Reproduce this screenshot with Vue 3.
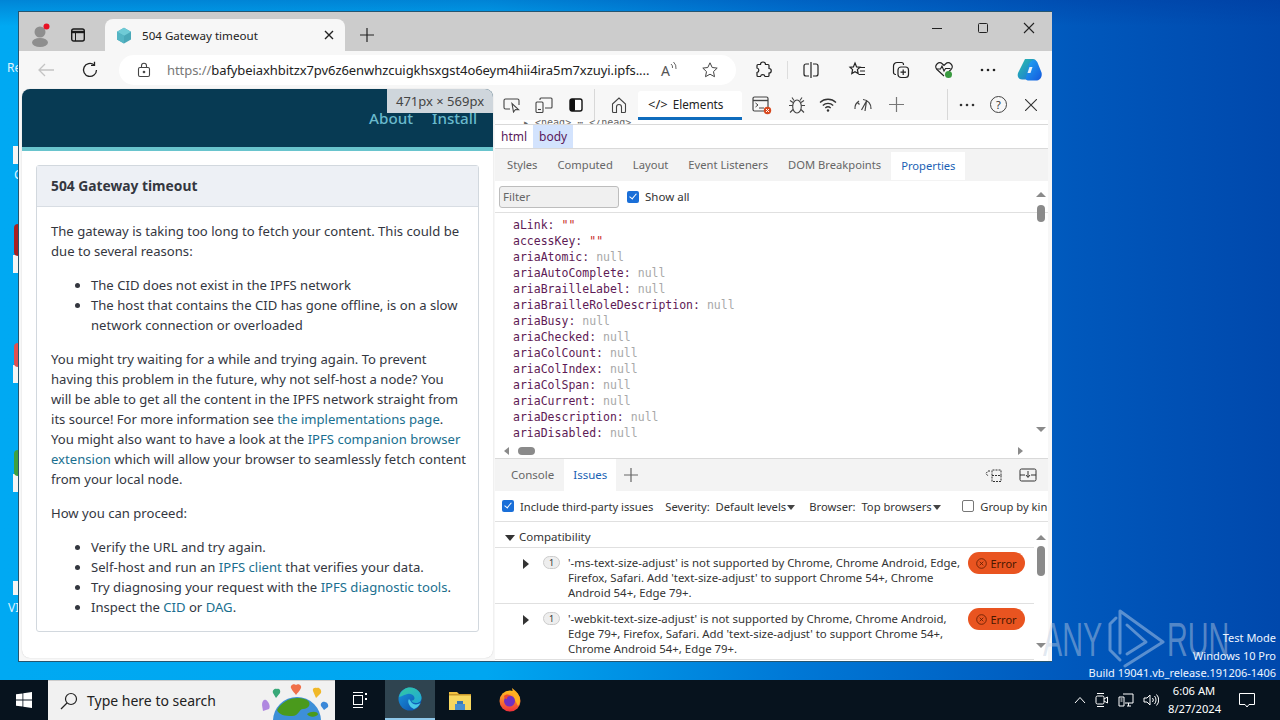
<script setup>
const props = [
  { key: 'aLink', value: '""', str: true },
  { key: 'accessKey', value: '""', str: true },
  { key: 'ariaAtomic', value: 'null' },
  { key: 'ariaAutoComplete', value: 'null' },
  { key: 'ariaBrailleLabel', value: 'null' },
  { key: 'ariaBrailleRoleDescription', value: 'null' },
  { key: 'ariaBusy', value: 'null' },
  { key: 'ariaChecked', value: 'null' },
  { key: 'ariaColCount', value: 'null' },
  { key: 'ariaColIndex', value: 'null' },
  { key: 'ariaColSpan', value: 'null' },
  { key: 'ariaCurrent', value: 'null' },
  { key: 'ariaDescription', value: 'null' },
  { key: 'ariaDisabled', value: 'null' }
]

const subTabs = ['Styles', 'Computed', 'Layout', 'Event Listeners', 'DOM Breakpoints']

const issues = [
  {
    lines: [
      "'-ms-text-size-adjust' is not supported by Chrome, Chrome Android, Edge,",
      "Firefox, Safari. Add 'text-size-adjust' to support Chrome 54+, Chrome",
      'Android 54+, Edge 79+.'
    ]
  },
  {
    lines: [
      "'-webkit-text-size-adjust' is not supported by Chrome, Chrome Android,",
      "Edge 79+, Firefox, Safari. Add 'text-size-adjust' to support Chrome 54+,",
      'Chrome Android 54+, Edge 79+.'
    ]
  }
]

// scraps of desktop icons showing left of the browser window
const scraps = [
  { top: 146, height: 18, color: '#f4f4f4' },
  { top: 255, height: 18, color: '#f4f4f4' },
  { top: 365, height: 18, color: '#f4f4f4' },
  { top: 474, height: 18, color: '#f4f4f4' },
  { top: 581, height: 14, color: '#f4f4f4' }
]
</script>

<template>
  <div class="desktop">
    <div class="desk-label" style="top: 59px">Re</div>
    <div class="desk-label" style="top: 166px; left: 14px">C</div>
    <div class="desk-label" style="top: 599px; left: 8px">VI</div>
    <div v-for="s in scraps" :key="s.top" class="scrap" :style="{ top: s.top + 'px', height: s.height + 'px', background: s.color }"></div>
    <div class="blob" style="top: 224px; height: 32px; background: #a82020"></div>
    <div class="blob" style="top: 343px; height: 24px; background: #e05050"></div>
    <div class="blob" style="top: 450px; height: 26px; background: #3fa03f"></div>

    <div class="window">
      <!-- tab strip -->
      <div class="tabstrip">
        <div class="profile">
          <svg width="24" height="28" viewBox="0 0 24 28">
            <circle cx="11" cy="11" r="5.500" fill="#8e8e8e" />
            <ellipse cx="11" cy="21.500" rx="8" ry="4.500" fill="#8e8e8e" />
            <circle cx="17.500" cy="5.500" r="3" fill="#e81123" />
          </svg>
        </div>
        <div class="strip-btn">
          <svg width="16" height="16" viewBox="0 0 16 16" fill="none" stroke="#1a1a1a" stroke-width="1.400">
            <rect x="1.700" y="2" width="12.600" height="12" rx="2" />
            <path d="M1.700 5h12.600" stroke-width="2.400" />
            <path d="M5.500 5v9" stroke-width="1" />
          </svg>
        </div>
        <div class="tab">
          <svg width="16" height="17" viewBox="0 0 16 17">
            <path d="M8 .8l7 4v7.600l-7 4-7-4V4.800z" fill="#4aa8b8" />
            <path d="M8 .8l7 4-7 4-7-4z" fill="#6fcbd6" />
            <path d="M8 8.800v7.600l-7-4V4.800z" fill="#55b5c4" />
          </svg>
          <span class="tab-title">504 Gateway timeout</span>
          <svg class="tab-close" width="10" height="10" viewBox="0 0 10 10" stroke="#222" stroke-width="1.400"><path d="M1 1l8 8M9 1l-8 8" /></svg>
        </div>
        <svg class="new-tab" width="16" height="16" viewBox="0 0 16 16" stroke="#222" stroke-width="1.200"><path d="M8 1v14M1 8h14" /></svg>
        <div class="win-controls">
          <svg width="12" height="12" viewBox="0 0 12 12" stroke="#222"><path d="M1 6.500h10" /></svg>
          <svg width="12" height="12" viewBox="0 0 12 12" stroke="#222" fill="none"><rect x="1.500" y="1.500" width="9" height="9" rx="1" /></svg>
          <svg width="12" height="12" viewBox="0 0 12 12" stroke="#222" stroke-width="1.100"><path d="M1 1l10 10M11 1L1 11" /></svg>
        </div>
      </div>

      <!-- address bar row -->
      <div class="toolbar">
        <svg class="back" width="18" height="16" viewBox="0 0 18 16" fill="none" stroke="#c4c4c4" stroke-width="1.300"><path d="M17 8H2M8 2L2 8l6 6" /></svg>
        <svg class="reload" width="18" height="18" viewBox="0 0 18 18" fill="none" stroke="#222" stroke-width="1.300"><path d="M15.500 9A6.500 6.500 0 1 1 13 3.800" /><path d="M13.500 .8v3.600H10" /></svg>
        <div class="address">
          <svg class="lock" width="14" height="16" viewBox="0 0 14 16" fill="none" stroke="#444" stroke-width="1.100"><rect x="1.500" y="5.500" width="11" height="9" rx="1.500" /><path d="M4.500 5.500V3.800a2.500 2.500 0 0 1 5 0v1.700" /><circle cx="7" cy="10" r=".8" fill="#444" /></svg>
          <span class="url"><span class="scheme">https://</span>bafybeiaxhbitzx7pv6z6enwhzcuigkhsxgst4o6eym4hii4ira5m7xzuyi.ipfs....</span>
          <span class="read-aloud">A<svg width="8" height="12" viewBox="0 0 8 12" fill="none" stroke="#555" stroke-width=".9"><path d="M1 3a4 4 0 0 1 1.500 4M3.500 1a8 8 0 0 1 2.500 7" /></svg></span>
          <svg class="star" width="18" height="18" viewBox="0 0 18 18" fill="none" stroke="#444"><path d="M9 1.800l2.200 4.700 5 .6-3.700 3.500 1 5.100L9 13.200l-4.500 2.500 1-5.100L1.800 7.100l5-.6z" /></svg>
        </div>
        <div class="tool-icons">
          <svg width="18" height="18" viewBox="0 0 18 18" fill="none" stroke="#222" stroke-width="1.200"><path d="M6.500 3.500a2.500 2.500 0 0 1 5 0h2.500a1 1 0 0 1 1 1v3a2.200 2.200 0 0 1 0 4.500v2.500a1 1 0 0 1-1 1h-3a2.300 2.300 0 0 0-4.500 0H4a1 1 0 0 1-1-1v-3a2.300 2.300 0 0 0 0-4.500V4.500a1 1 0 0 1 1-1z" /></svg>
          <span class="tool-sep"></span>
          <svg width="18" height="18" viewBox="0 0 18 18" fill="none" stroke="#222" stroke-width="1.200"><path d="M9 1v16M7 3H4a2 2 0 0 0-2 2v8a2 2 0 0 0 2 2h3M11 3h3a2 2 0 0 1 2 2v8a2 2 0 0 1-2 2h-3" /></svg>
          <svg class="fav" width="18" height="18" viewBox="0 0 18 18" fill="none" stroke="#222" stroke-width="1.200"><path d="M7 2l1.600 3.900 3.400.3-2.600 2.400.8 4L7 10.800l-3.200 1.800.8-4L2 6.200l3.400-.3zM12 6.500h5M12 10h5M10.500 13.500H17" /></svg>
          <svg width="18" height="18" viewBox="0 0 18 18" fill="none" stroke="#222" stroke-width="1.200"><rect x="6" y="6" width="10.500" height="10.500" rx="3" /><path d="M11.200 8.500v5.500M8.500 11.200H14M4 13.500H3.500A2 2 0 0 1 1.500 11.500V5a3.500 3.500 0 0 1 3.500-3.500h4.500a2 2 0 0 1 2 2V4" /></svg>
          <svg class="health" width="20" height="18" viewBox="0 0 20 18" fill="none" stroke="#222" stroke-width="1.100"><path d="M10 15L3 8.500a4 4 0 0 1 0-5.500 4 4 0 0 1 5.500 0L10 4.500 11.500 3a4 4 0 0 1 5.500 0 4 4 0 0 1 0 5.500L15 10.500" /><path d="M2.500 8h4l1.500-3 2 5 1.500-2.500h5" /><circle cx="14.500" cy="13.500" r="3.500" fill="#3a9a40" stroke="none" /></svg>
          <svg width="16" height="4" viewBox="0 0 16 4" fill="#222"><circle cx="2" cy="2" r="1.300" /><circle cx="8" cy="2" r="1.300" /><circle cx="14" cy="2" r="1.300" /></svg>
          <svg class="copilot" width="26" height="24" viewBox="0 0 26 24">
            <defs>
              <linearGradient id="cpA" x1="0" y1="0" x2="1" y2="1"><stop offset="0" stop-color="#2cc0a8" /><stop offset=".6" stop-color="#1f90c8" /><stop offset="1" stop-color="#2a60d8" /></linearGradient>
              <linearGradient id="cpB" x1="0" y1="0" x2="1" y2="1"><stop offset="0" stop-color="#20a8f4" /><stop offset="1" stop-color="#1458dc" /></linearGradient>
            </defs>
            <path d="M8 1h8c2 0 3 1 3 2.500L14 18c-.7 1.800-2.500 3.500-4.500 3.500H5C1.500 21.500 0 18 1 15z" fill="url(#cpA)" />
            <path d="M12 7c.7-2.500 2.500-5 4.500-5s3.500 1 4 2.500l4 10c1 3.500-1 7.500-4.500 8H11c-1.500 0-2.500-1-2-2.500z" fill="url(#cpB)" />
            <path d="M12.500 9h3l-2 6h-3z" fill="#e8f2fa" />
          </svg>
        </div>
      </div>

      <div class="content">
        <!-- inspected page -->
        <div class="page">
          <header class="page-head">
            <nav><a>About</a><a>Install</a></nav>
            <div class="size-tip">471px × 569px</div>
          </header>
          <div class="page-body">
            <section class="card">
              <h2 class="card-head">504 Gateway timeout</h2>
              <div class="card-body">
                <p>The gateway is taking too long to fetch your content. This could be<br />due to several reasons:</p>
                <ul>
                  <li>The CID does not exist in the IPFS network</li>
                  <li>The host that contains the CID has gone offline, is on a slow<br />network connection or overloaded</li>
                </ul>
                <p>You might try waiting for a while and trying again. To prevent<br />having this problem in the future, why not self-host a node? You<br />will be able to get all the content in the IPFS network straight from<br />its source! For more information see <a>the implementations page</a>.<br />You might also want to have a look at the <a>IPFS companion browser<br />extension</a> which will allow your browser to seamlessly fetch content<br />from your local node.</p>
                <p>How you can proceed:</p>
                <ul>
                  <li>Verify the URL and try again.</li>
                  <li>Self-host and run an <a>IPFS client</a> that verifies your data.</li>
                  <li>Try diagnosing your request with the <a>IPFS diagnostic tools</a>.</li>
                  <li>Inspect the <a>CID</a> or <a>DAG</a>.</li>
                </ul>
              </div>
            </section>
          </div>
        </div>

        <!-- devtools -->
        <div class="devtools">
          <div class="dt-toolbar">
            <div class="dt-group">
              <svg width="18" height="16" viewBox="0 0 18 16" fill="none" stroke="#444" stroke-width="1.100"><path d="M7 12H2.500A1.500 1.500 0 0 1 1 10.500v-7A1.500 1.500 0 0 1 2.500 2h12A1.500 1.500 0 0 1 16 3.500V8" /><path d="M9 6.500l1.500 8.500 2-2.500 3 .2z" /></svg>
              <svg width="18" height="16" viewBox="0 0 18 16" fill="none" stroke="#444" stroke-width="1.100"><rect x="1" y="5" width="7" height="10.500" rx="1" /><path d="M5 3V2a1 1 0 0 1 1-1h10a1 1 0 0 1 1 1v8a1 1 0 0 1-1 1h-6" /><path d="M3 12.500h3" /></svg>
              <svg class="dock" width="14" height="14" viewBox="0 0 14 14"><rect x="1" y="1" width="12" height="12" rx="2" fill="#fff" stroke="#111" stroke-width="1.400" /><rect x="1" y="1" width="5" height="12" rx="1" fill="#111" /></svg>
            </div>
            <span class="dt-sep first"></span>
            <svg class="home" width="18" height="18" viewBox="0 0 18 18" fill="none" stroke="#444" stroke-width="1.100"><path d="M2.500 8L9 2l6.500 6v7.500a1 1 0 0 1-1 1h-3V11a2.500 2.500 0 0 0-5 0v5.500h-3a1 1 0 0 1-1-1z" /></svg>
            <div class="dt-main-tab"><span class="code-glyph">&lt;/&gt;</span> Elements</div>
            <div class="dt-icons">
              <svg width="20" height="20" viewBox="0 0 20 20"><rect x="1" y="2" width="15" height="14" rx="1.500" fill="none" stroke="#444" stroke-width="1.200" /><path d="M1 5.500h15" stroke="#444" stroke-width="1.400" /><path d="M3.500 8l2.500 2-2.500 2M7 13h5" fill="none" stroke="#444" /><circle cx="15.500" cy="15.500" r="3.700" fill="#d8481e" /><path d="M14 14l3 3M17 14l-3 3" stroke="#fff" /></svg>
              <svg width="18" height="18" viewBox="0 0 18 18" fill="none" stroke="#444" stroke-width="1.100"><ellipse cx="9" cy="10.500" rx="4.300" ry="6.500" /><path d="M6 4.500L4 1.500M12 4.500l2-3M4.700 9.500H1M13.300 9.500H17M5 13.500L2 16.500M13 13.500l3 3M5 6.500L2 4.500M13 6.500l3-2" /></svg>
              <svg class="wifi" width="18" height="16" viewBox="0 0 18 16" fill="none" stroke="#333" stroke-width="1.300"><path d="M1 5.500a11.500 11.500 0 0 1 16 0M3.800 8.500a7.500 7.500 0 0 1 10.400 0M6.300 11a4 4 0 0 1 5.400 0" /><circle cx="9" cy="13.500" r="1.200" fill="#333" stroke="none" /></svg>
              <svg width="20" height="16" viewBox="0 0 20 16" fill="none" stroke="#444" stroke-width="1.200"><path d="M2 12a8.500 8.500 0 0 1 4-8M10 2.500a8.500 8.500 0 0 1 8 9.500M4.500 5.500l2 2M8.500 13l5-9-1.500 10" /></svg>
              <svg width="15" height="15" viewBox="0 0 15 15" stroke="#777" stroke-width="1.200"><path d="M7.500 0v15M0 7.500h15" /></svg>
            </div>
            <span class="dt-sep second"></span>
            <svg width="16" height="4" viewBox="0 0 16 4" fill="#333"><circle cx="2" cy="2" r="1.300" /><circle cx="8" cy="2" r="1.300" /><circle cx="14" cy="2" r="1.300" /></svg>
            <div class="help">?</div>
            <svg class="dt-close" width="12" height="12" viewBox="0 0 12 12" stroke="#333" stroke-width="1.100"><path d="M0 0l12 12M12 0L0 12" /></svg>
          </div>

          <div class="dom-clip"><span>▸ &lt;head&gt; ⋯ &lt;/head&gt;</span></div>

          <div class="crumbs">
            <span class="crumb">html</span>
            <span class="crumb selected">body</span>
          </div>

          <div class="sub-tabs">
            <span v-for="t in subTabs" :key="t" class="sub-tab">{{ t }}</span>
            <span class="sub-tab active">Properties</span>
          </div>

          <div class="filter-row">
            <div class="filter">Filter</div>
            <span class="check on"></span>
            <span class="show-all">Show all</span>
            <div class="vbar top"><i class="up"></i><b class="thumb small"></b></div>
          </div>

          <div class="props">
            <div class="props-list">
              <div v-for="p in props" :key="p.key" class="prop">
                <span class="p-key">{{ p.key }}:</span>
                <span :class="p.str ? 'p-str' : 'p-null'">{{ p.value }}</span>
              </div>
            </div>
            <i class="down prop-down"></i>
          </div>

          <div class="hbar">
            <i class="left"></i>
            <b class="hthumb"></b>
            <i class="right"></i>
          </div>

          <div class="drawer-tabs">
            <span class="drawer-tab">Console</span>
            <span class="drawer-tab active">Issues</span>
            <svg width="14" height="14" viewBox="0 0 14 14" stroke="#666" stroke-width="1.200"><path d="M7 0v14M0 7h14" /></svg>
            <div class="drawer-icons">
              <svg width="18" height="16" viewBox="0 0 18 16" fill="none" stroke="#333"><path d="M5 4H3L1 6.500 3 9M7 8.500h9v6H7zM7 8.500V3h9v5.500" stroke-dasharray="2 1" /></svg>
              <svg width="18" height="14" viewBox="0 0 18 14" fill="none" stroke="#333"><rect x="1" y="1" width="16" height="12" rx="1.500" /><path d="M1 7h5M12 7h5M9 3v6M7 7l2 2.500L11 7" /></svg>
            </div>
          </div>

          <div class="issue-filters">
            <span class="check on"></span>
            <span class="f-label inc">Include third-party issues</span>
            <span class="f-label sev">Severity:&nbsp; Default levels<i class="caret"></i></span>
            <span class="f-label brow">Browser:&nbsp; Top browsers<i class="caret"></i></span>
            <span class="check off"></span>
            <span class="f-label">Group by kin</span>
          </div>

          <div class="issues">
            <div class="compat"><i class="tri-down"></i>Compatibility</div>
            <div v-for="(issue, i) in issues" :key="i" class="issue">
              <i class="tri-right"></i>
              <span class="count">1</span>
              <div class="issue-text">
                <div v-for="l in issue.lines" :key="l">{{ l }}</div>
              </div>
              <span class="error-pill">
                <svg width="11" height="11" viewBox="0 0 11 11" fill="none" stroke="#5a1a00" stroke-width=".8"><circle cx="5.500" cy="5.500" r="4.800" /><path d="M3.700 3.700l3.600 3.600M7.300 3.700l-3.600 3.600" /></svg>
                Error
              </span>
            </div>
            <div class="vbar issues-bar"><i class="up"></i><b class="thumb big"></b></div>
            <i class="down issues-down"></i>
          </div>
        </div>
      </div>
    </div>

    <!-- watermark -->
    <div class="watermark">
      <span>ANY</span>
      <svg width="70" height="70" viewBox="0 0 70 70" fill="none" stroke="#fff" stroke-width="3" stroke-linejoin="round" stroke-linecap="round">
        <path d="M16 13l-6 6v26l10 10" />
        <path d="M20 48V6l43 31-38 24" />
        <path d="M27 20l19 17-19 12" />
      </svg>
      <span>RUN</span>
    </div>
    <div class="test-mode">
      <div>Test Mode</div>
      <div>Windows 10 Pro</div>
      <div>Build 19041.vb_release.191206-1406</div>
    </div>

    <!-- taskbar -->
    <div class="taskbar">
      <div class="start">
        <svg width="16" height="16" viewBox="0 0 16 16" fill="#fff"><path d="M0 2.300l6.500-.9v6.200H0zM7.300 1.300L16 0v7.600H7.300zM0 8.400h6.500v6.200L0 13.700zM7.300 8.400H16V16l-8.700-1.300z" /></svg>
      </div>
      <div class="search">
        <svg width="18" height="18" viewBox="0 0 18 18" fill="none" stroke="#222" stroke-width="1.200"><circle cx="11" cy="7" r="5.500" /><path d="M7 11l-6 6" /></svg>
        <span>Type here to search</span>
        <svg class="globe" width="72" height="40" viewBox="0 0 72 40">
          <circle cx="36" cy="41" r="24" fill="#3d8fd8" />
          <path d="M16 30c6-10 18-15 30-10 5 3 2 9-4 9-4 0-4 7-11 7-7 0-13-1-15-6zM46 34c4-3 10-3 11 0 0 2-8 5-11 0z" fill="#4a9a1c" />
          <path d="M35 5c-2-2-6 0-5 3 1 3 4 5 5 7 1-2 4-4 5-7 1-3-3-5-5-3z" fill="#f0704a" />
          <path d="M16 9c-2-1-5 1-4 4l3 5 4-5c1-3-1-5-3-4z" fill="#38a878" />
          <path d="M56 8c-2-1-5 0-4 3l3 7 5-5c1-3-2-6-4-5z" fill="#f0b828" />
          <path d="M5 20c-2-1-4 1-4 5l1 6 6-2c2-3-1-8-3-9z" fill="#b088e0" />
          <path d="M64 22c-2-1-5 1-4 4l3 4 4-3c1-2-1-5-3-5z" fill="#3a88d8" />
        </svg>
      </div>
      <div class="task-btn">
        <svg width="16" height="18" viewBox="0 0 16 18" fill="none" stroke="#fff"><rect x="1.500" y="4.500" width="9" height="9" /><path d="M1 1.500h10M1 16.500h10" /><path d="M14 2v2M14 7v2" stroke-width="2" /></svg>
      </div>
      <div class="task-btn current">
        <svg width="24" height="24" viewBox="0 0 24 24">
          <defs>
            <linearGradient id="edgeA" x1="0" y1="0" x2="1" y2="1"><stop offset="0" stop-color="#34c8a0" /><stop offset="1" stop-color="#1fa8d8" /></linearGradient>
            <linearGradient id="edgeB" x1="0" y1="0" x2="1" y2="1"><stop offset="0" stop-color="#1a98e0" /><stop offset="1" stop-color="#0c4aa8" /></linearGradient>
          </defs>
          <circle cx="12" cy="12" r="11.500" fill="url(#edgeB)" />
          <path d="M1 10C3 3 8 .5 12 .5c7 0 11.500 5.500 11.500 10.500 0 3-2.500 5-5.500 5s-4-1-4.500-2.500c3 0 3.500-2 2.500-4C14.500 7 11 6 8 7.500 4.500 8.500 2 10 1 10z" fill="url(#edgeA)" />
          <path d="M11 12c-2 2 0 8 5 10 3-1 5-3 6.500-6-3 2-7 2-9-.5-.8-1-1.500-2.500-2.500-3.500z" fill="#48c8e8" />
        </svg>
      </div>
      <div class="task-btn">
        <svg width="24" height="22" viewBox="0 0 24 22">
          <path d="M1 3h8l2 2h12v15H1z" fill="#f0c040" />
          <rect x="1" y="6" width="22" height="15" fill="#f8d860" />
          <rect x="9" y="12" width="6" height="3" fill="#3a7ab8" />
          <rect x="7" y="15" width="10" height="6" fill="#4a90d0" />
          <rect x="1" y="5" width="22" height="1.500" fill="#c8982a" />
        </svg>
      </div>
      <div class="task-btn">
        <svg width="24" height="24" viewBox="0 0 24 24">
          <defs>
            <linearGradient id="ffA" x1="0" y1="0" x2="0" y2="1"><stop offset="0" stop-color="#ffc020" /><stop offset="1" stop-color="#f0303c" /></linearGradient>
          </defs>
          <circle cx="12" cy="13" r="10.500" fill="url(#ffA)" />
          <path d="M14 0c4 3 8 7 8 12 0 3-1 5-2 6l-4-8z" fill="#ffb020" />
          <circle cx="11.500" cy="13" r="5.500" fill="#7030c0" />
          <path d="M6 8c2-2 5-2 7 0-3 0-4 1-4 3-2 0-3-1-3-3z" fill="#f04830" />
        </svg>
      </div>
      <div class="tray">
        <svg width="12" height="8" viewBox="0 0 12 8" fill="none" stroke="#fff"><path d="M1 7l5-5.500L11 7" /></svg>
        <svg width="14" height="18" viewBox="0 0 14 18" fill="none" stroke="#fff"><rect x="1" y="5" width="8" height="8" rx="1.500" /><path d="M9 8l3.500-2v6L9 10M2 2.500h7M2 15.500h7" /></svg>
        <svg width="16" height="14" viewBox="0 0 16 14" fill="none" stroke="#fff"><path d="M5 1h10v9H7M1 4h5v9H1zM9 13h4M10.500 10v3M2.500 6h2M2.500 8h2" /></svg>
        <svg width="16" height="14" viewBox="0 0 16 14" fill="none" stroke="#fff"><path d="M1 5v4h3l3 3V2L4 5zM9.500 5a3 3 0 0 1 0 4M11.500 3a6 6 0 0 1 0 8M13.500 1.500a8 8 0 0 1 0 11" /></svg>
        <div class="clock">
          <div>6:06 AM</div>
          <div>8/27/2024</div>
        </div>
        <svg class="notif" width="16" height="15" viewBox="0 0 16 15" fill="none" stroke="#fff"><path d="M.5.500h15v11H10L8 14l-2-2.500H.5z" /></svg>
      </div>
    </div>
  </div>
</template>

<style>
html, body {
  margin: 0;
  overflow: hidden;
}
</style>

<style scoped>
.desktop {
  position: relative;
  width: 1280px;
  height: 720px;
  overflow: hidden;
  font-family: "Noto Sans", sans-serif;
  background:
    linear-gradient(180deg, rgba(0, 50, 150, 0.3) 0, rgba(0, 50, 150, 0) 26px),
    linear-gradient(90deg, #00a9f2 0%, #00a6f0 38%, #0078d6 62%, #0058bc 84%, #0048ac 100%);
}
.desk-label {
  position: absolute;
  left: 7px;
  color: #dff3ff;
  font-size: 12px;
}
.scrap {
  position: absolute;
  left: 13px;
  width: 5px;
}
.blob {
  position: absolute;
  left: 14px;
  width: 4px;
  border-radius: 4px 0 0 4px;
}
.window {
  position: absolute;
  left: 18px;
  top: 11px;
  width: 1034px;
  height: 651px;
  box-sizing: border-box;
  border: 1px solid #26556f;
  border-right: none;
  background: #f7f7f7;
  display: flex;
  flex-direction: column;
  overflow: hidden;
}

/* tab strip */
.tabstrip {
  height: 39px;
  flex: none;
  background: #cccccc;
  display: flex;
  align-items: flex-end;
}
.profile {
  width: 40px;
  height: 32px;
  margin-left: 2px;
  display: flex;
  align-items: center;
  justify-content: center;
}
.strip-btn {
  width: 18px;
  height: 32px;
  margin-left: 9px;
  display: flex;
  align-items: center;
}
.tab {
  width: 240px;
  height: 32px;
  margin-left: 17px;
  box-sizing: border-box;
  padding: 0 11px 0 11px;
  background: #f7f7f7;
  border-radius: 8px 8px 0 0;
  display: flex;
  align-items: center;
  font-size: 11.600px;
  color: #222;
}
.tab-title {
  margin-left: 10px;
  flex: 1;
  white-space: nowrap;
}
.new-tab {
  margin-left: 14px;
  margin-bottom: 8px;
}
.win-controls {
  margin-left: auto;
  height: 100%;
  width: 121px;
  box-sizing: border-box;
  padding: 0 17px 8px 0;
  display: flex;
  align-items: center;
  justify-content: space-between;
}

/* address bar */
.toolbar {
  height: 38px;
  flex: none;
  display: flex;
  align-items: center;
  position: relative;
}
.back {
  margin-left: 18px;
  flex: none;
}
.reload {
  margin-left: 26px;
  flex: none;
}
.address {
  margin-left: 20px;
  width: 617px;
  flex: none;
  height: 30px;
  box-sizing: border-box;
  padding: 0 16px 0 18px;
  border-radius: 15px;
  background: #fff;
  display: flex;
  align-items: center;
}
.lock {
  flex: none;
}
.url {
  margin-left: 16px;
  flex: none;
  font-size: 13px;
  color: #222;
  white-space: nowrap;
  width: 481px;
  letter-spacing: -0.07px;
}
.scheme {
  color: #777;
}
.read-aloud {
  margin-left: 13px;
  font-size: 14px;
  color: #555;
  width: 22px;
  flex: none;
  display: flex;
  align-items: flex-start;
  white-space: nowrap;
}
.star {
  margin-left: 18px;
  flex: none;
}
.tool-icons {
  margin-left: 18px;
  display: flex;
  align-items: center;
  gap: 26px;
  flex: 1;
}
.tool-icons svg {
  flex: none;
}
.tool-sep {
  width: 1px;
  height: 18px;
  background: #ddd;
  margin: 0 -12px 0 -11px;
}
.fav {
  margin-left: 2px;
}
.health {
  margin-left: -2px;
}
.copilot {
  margin-left: -5px;
}

/* content */
.content {
  flex: 1;
  min-height: 0;
  display: flex;
  padding-left: 3px;
  gap: 2px;
}
.page {
  width: 471px;
  height: 569px;
  flex: none;
  background: #fff;
  border-radius: 8px;
  overflow: hidden;
  box-shadow: 0 0 1px #bbb;
  display: flex;
  flex-direction: column;
}
.page-head {
  position: relative;
  height: 58px;
  flex: none;
  background: #073a53;
  border-bottom: 4px solid #69c4cd;
}
.page-head nav {
  display: flex;
  justify-content: flex-end;
  gap: 19px;
  padding: 18px 16px 0 0;
  font-size: 15.200px;
  line-height: 22px;
  font-weight: 500;
  color: #69b9cc;
}
.size-tip {
  position: absolute;
  top: 0;
  right: 0;
  width: 106px;
  height: 24px;
  background: #cfd6dc;
  color: #444;
  font-size: 13px;
  line-height: 24px;
  text-align: center;
  white-space: nowrap;
}
.page-body {
  padding: 14px 14px 0;
}
.card {
  width: 443px;
  height: 467px;
  box-sizing: border-box;
  border: 1px solid #d2d8de;
  border-radius: 3px;
  color: #34373f;
}
.card-head {
  margin: 0;
  height: 41px;
  box-sizing: border-box;
  padding: 0 14px;
  background: #edf0f5;
  border-bottom: 1px solid #d8dde3;
  font-size: 13.800px;
  font-weight: 700;
  line-height: 40px;
}
.card-body {
  padding: 14px 14px 0;
  font-size: 13.100px;
  line-height: 20px;
  white-space: nowrap;
}
.card-body p {
  margin: 0 0 14px;
}
.card-body ul {
  margin: 0 0 14px;
  padding-left: 40px;
}
.card-body a {
  color: #1a6f8f;
}

/* devtools */
.devtools {
  position: relative;
  width: 553px;
  display: flex;
  flex-direction: column;
  background: #fff;
  font-size: 11.500px;
  color: #444;
  overflow: hidden;
}
.dt-toolbar {
  height: 31px;
  flex: none;
  background: #f7f7f7;
  display: flex;
  align-items: center;
  padding-left: 8px;
}
.dt-toolbar > svg {
  flex: none;
}
.dt-group {
  display: flex;
  align-items: center;
  gap: 14px;
}
.dock {
  margin-left: 2px;
}
.dt-sep {
  width: 1px;
  height: 31px;
  flex: none;
  background: #d8d8d8;
}
.dt-sep.first {
  margin-left: 11px;
}
.dt-sep.second {
  margin-left: 43px;
  margin-right: 11px;
}
.home {
  margin-left: 15px;
}
.dt-main-tab {
  width: 104px;
  height: 29px;
  flex: none;
  align-self: flex-end;
  margin-left: 10px;
  box-sizing: border-box;
  padding-left: 10px;
  background: #fff;
  border-bottom: 3px solid #0f6cbd;
  border-radius: 3px 3px 0 0;
  line-height: 26px;
  font-size: 11.700px;
  color: #222;
  white-space: nowrap;
}
.code-glyph {
  font-size: 13px;
  margin-right: 2px;
}
.dt-icons {
  display: flex;
  align-items: center;
  gap: 16px;
  margin-left: 10px;
}
.dt-icons svg {
  flex: none;
}
.wifi {
  margin-left: -3px;
}
.help {
  width: 15px;
  height: 15px;
  flex: none;
  margin-left: 15px;
  border: 1px solid #444;
  border-radius: 50%;
  text-align: center;
  line-height: 15px;
  font-size: 11px;
  color: #333;
}
.dt-close {
  margin-left: 18px;
}
.dom-clip {
  height: 4px;
  flex: none;
  overflow: hidden;
  border-bottom: 1px solid #d9d9d9;
  font-family: "DejaVu Sans Mono", monospace;
  font-size: 10px;
  line-height: 6px;
  padding-left: 28px;
  color: #666;
  white-space: nowrap;
}
.crumbs {
  height: 24px;
  flex: none;
  display: flex;
  border-bottom: 1px solid #d9d9d9;
  box-sizing: border-box;
  color: #5a1a5a;
  font-size: 12px;
}
.crumb {
  padding: 0 6px;
  line-height: 24px;
}
.crumb.selected {
  background: #d3e3fd;
}
.sub-tabs {
  height: 32px;
  flex: none;
  box-sizing: border-box;
  background: #f3f3f3;
  display: flex;
  align-items: stretch;
  padding-left: 2px;
  font-size: 11.200px;
}
.sub-tab {
  padding: 0 10px;
  line-height: 32px;
  color: #666;
  white-space: nowrap;
}
.sub-tab.active {
  background: #fff;
  color: #1a5fb4;
  margin: 3px 0 1px;
  line-height: 27px;
}
.filter-row {
  height: 32px;
  flex: none;
  box-sizing: border-box;
  display: flex;
  align-items: center;
  padding-left: 4px;
  border-bottom: 1px solid #e0e0e0;
  position: relative;
}
.filter {
  width: 120px;
  height: 22px;
  box-sizing: border-box;
  padding-left: 3px;
  border: 1px solid #bdbdbd;
  border-radius: 3px;
  background: #f0f0f0;
  line-height: 20px;
  color: #666;
}
.check {
  width: 12px;
  height: 12px;
  box-sizing: border-box;
  border-radius: 2px;
  flex: none;
  position: relative;
}
.check.on {
  background: #1a6fd8;
}
.check.on::after {
  content: "";
  position: absolute;
  left: 3.500px;
  top: 1px;
  width: 3px;
  height: 6px;
  border: solid #fff;
  border-width: 0 1.500px 1.500px 0;
  transform: rotate(40deg);
}
.check.off {
  border: 1px solid #777;
  background: #fff;
}
.filter-row .check {
  margin-left: 8px;
}
.show-all {
  margin-left: 6px;
  color: #333;
}
.vbar {
  position: absolute;
  right: 2px;
  width: 10px;
  display: flex;
  flex-direction: column;
  align-items: center;
}
.vbar.top {
  top: 11px;
  gap: 8px;
}
.thumb {
  width: 8px;
  border-radius: 4px;
  background: #8a8a8a;
}
.thumb.small {
  height: 17px;
}
.thumb.big {
  height: 30px;
}
.up, .down, .left, .right {
  display: block;
  width: 0;
  height: 0;
  border: 4px solid transparent;
}
.up {
  border-top: none;
  border-left-width: 5px;
  border-right-width: 5px;
  border-bottom: 5px solid #8a8a8a;
}
.down {
  border-bottom: none;
  border-left-width: 5px;
  border-right-width: 5px;
  border-top: 5px solid #8a8a8a;
}
.left {
  border-left: none;
  border-right: 5px solid #8a8a8a;
}
.right {
  border-right: none;
  border-left: 5px solid #8a8a8a;
}
.props {
  position: relative;
  height: 231px;
  flex: none;
  padding: 4px 0 0 18px;
  box-sizing: border-box;
  font-family: "DejaVu Sans Mono", monospace;
  font-size: 11.500px;
  line-height: 16px;
  overflow: hidden;
}
.p-key {
  color: #5e1a55;
  margin-right: 7px;
}
.p-null {
  color: #a8a8a8;
}
.p-str {
  color: #c62828;
}
.prop-down {
  position: absolute;
  right: 2px;
  top: 214px;
}
.hbar {
  height: 15px;
  flex: none;
  box-sizing: border-box;
  display: flex;
  align-items: center;
  padding: 0 25px 0 9px;
  border-bottom: 1px solid #d9d9d9;
}
.hthumb {
  width: 17px;
  height: 8px;
  border-radius: 4px;
  background: #8a8a8a;
  margin-left: 9px;
}
.hbar .right {
  margin-left: auto;
}
.drawer-tabs {
  height: 32px;
  flex: none;
  display: flex;
  align-items: center;
  background: #f3f3f3;
  padding-left: 6px;
  color: #666;
}
.drawer-tab {
  padding: 0 10px;
  line-height: 32px;
}
.drawer-tab.active {
  background: #fff;
  color: #1a5fb4;
  margin-right: 8px;
  padding: 0 9px;
}
.drawer-icons {
  margin-left: auto;
  margin-right: 11px;
  display: flex;
  align-items: center;
  gap: 16px;
}
.issue-filters {
  height: 31px;
  flex: none;
  box-sizing: border-box;
  display: flex;
  align-items: center;
  padding-left: 7px;
  border-bottom: 1px solid #e0e0e0;
  white-space: nowrap;
  color: #333;
  overflow: hidden;
  font-size: 11.200px;
}
.f-label {
  margin-left: 6px;
  flex: none;
}
.f-label.sev {
  position: relative;
  width: 127px;
  margin-left: 12px;
}
.f-label.brow {
  position: relative;
  width: 127px;
  margin-left: 17px;
  margin-right: 26px;
}
.caret {
  display: inline-block;
  width: 0;
  height: 0;
  border: 4px solid transparent;
  border-top: 5px solid #444;
  border-bottom: none;
  margin-left: 1px;
  vertical-align: 1px;
}
.issues {
  position: relative;
  flex: 1;
  min-height: 0;
  overflow: hidden;
  color: #333;
}
.compat {
  height: 26px;
  box-sizing: border-box;
  padding-left: 24px;
  position: relative;
  line-height: 29px;
  border-bottom: 1px solid #e0e0e0;
  margin-right: 14px;
}
.tri-down {
  position: absolute;
  left: 10px;
  top: 13px;
  width: 0;
  height: 0;
  border: 5px solid transparent;
  border-top: 6px solid #333;
  border-bottom: none;
}
.issue {
  position: relative;
  height: 56px;
  box-sizing: border-box;
  margin-right: 14px;
  border-bottom: 1px solid #e0e0e0;
  padding: 7px 0 0 73px;
  line-height: 15px;
  font-size: 11.400px;
  white-space: nowrap;
}
.tri-right {
  position: absolute;
  left: 28px;
  top: 11px;
  width: 0;
  height: 0;
  border: 5px solid transparent;
  border-left: 6px solid #333;
  border-right: none;
}
.count {
  position: absolute;
  left: 48px;
  top: 8px;
  width: 17px;
  height: 13px;
  box-sizing: border-box;
  border: 1px solid #ccc;
  border-radius: 7px;
  background: #eee;
  font-size: 9px;
  line-height: 11px;
  text-align: center;
}
.error-pill {
  position: absolute;
  left: 473px;
  top: 4px;
  width: 57px;
  height: 22px;
  box-sizing: border-box;
  border-radius: 11px;
  background: #e95420;
  color: #4a1800;
  font-size: 11px;
  display: flex;
  align-items: center;
  justify-content: center;
  gap: 3px;
}
.issues-bar {
  top: 13px;
  gap: 6px;
}
.issues-down {
  position: absolute;
  right: 2px;
  top: 121px;
}

/* watermark */
.watermark {
  position: absolute;
  left: 1043px;
  top: 605px;
  display: flex;
  align-items: center;
  color: rgba(190, 205, 225, 0.45);
  font-size: 48px;
  line-height: 56px;
  font-family: "Liberation Sans", sans-serif;
  pointer-events: none;
}
.watermark span {
  display: block;
  width: 57px;
  transform: scaleX(0.6);
  transform-origin: left center;
  white-space: nowrap;
}
.watermark svg {
  opacity: 0.35;
  flex: none;
}
.watermark svg + span {
  margin-left: -3px;
}
.test-mode {
  position: absolute;
  right: 4px;
  top: 629px;
  text-align: right;
  font-size: 11px;
  line-height: 17.500px;
  color: #eef5ff;
  white-space: nowrap;
}

/* taskbar */
.taskbar {
  position: absolute;
  left: 0;
  bottom: 0;
  width: 1280px;
  height: 40px;
  background: #07131e;
  display: flex;
  align-items: stretch;
}
.start {
  width: 48px;
  display: flex;
  align-items: center;
  justify-content: center;
}
.search {
  position: relative;
  width: 287px;
  background: #f1f1f1;
  box-sizing: border-box;
  padding-left: 12px;
  display: flex;
  align-items: center;
  gap: 9px;
  font-size: 14px;
  color: #222;
  border-top: 1px solid #ccc;
}
.globe {
  position: absolute;
  right: 2px;
  bottom: 0;
}
.task-btn {
  width: 50px;
  display: flex;
  align-items: center;
  justify-content: center;
}
.task-btn.current {
  background: #2f4450;
  box-sizing: border-box;
  border-bottom: 2px solid #8fc8ea;
}
.tray {
  margin-left: auto;
  display: flex;
  align-items: center;
  color: #fff;
  gap: 9px;
  padding-right: 25px;
}
.clock {
  width: 52px;
  text-align: center;
  font-size: 11.200px;
  line-height: 18px;
  white-space: nowrap;
}
.notif {
  margin-left: 10px;
}
</style>
